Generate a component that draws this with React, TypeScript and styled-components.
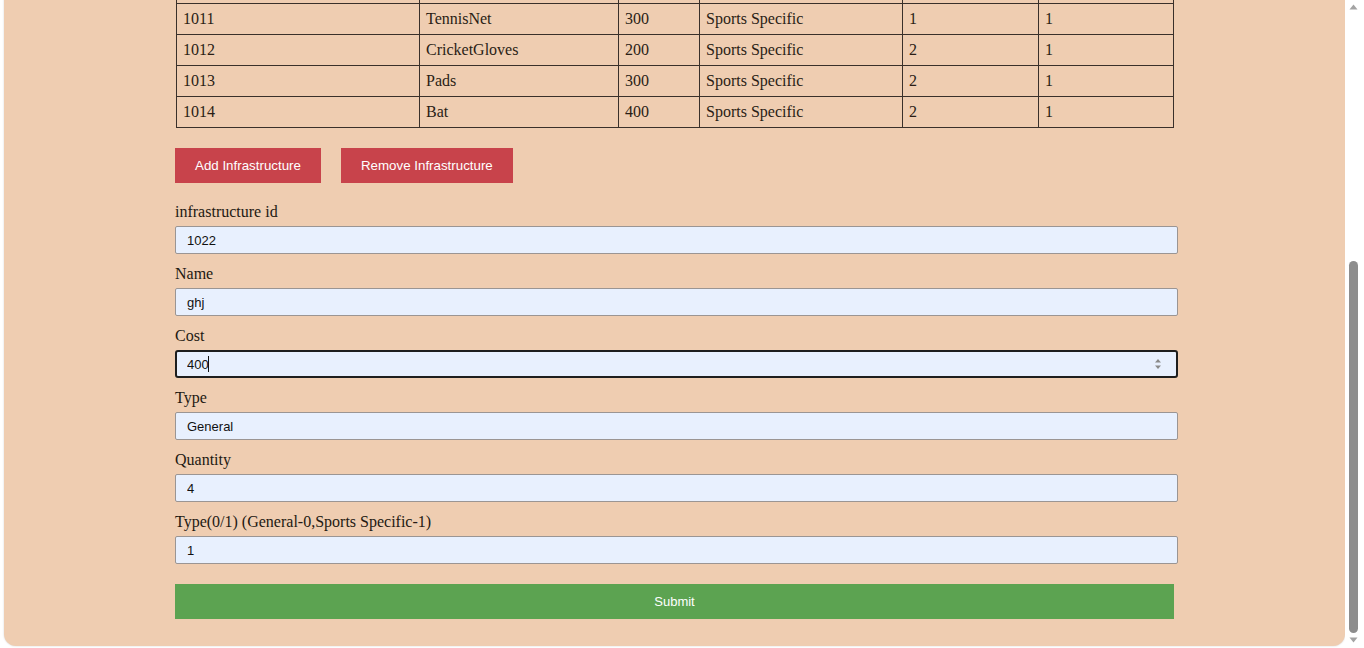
import React from "react";
import styled, { createGlobalStyle } from "styled-components";

const GlobalStyle = createGlobalStyle`
  html, body {
    margin: 0;
    padding: 0;
    background: #ffffff;
    overflow: hidden;
    font-family: "Liberation Serif", "Times New Roman", serif;
  }
  * { box-sizing: border-box; }
`;

const Screen = styled.div`
  display: flex;
  flex-direction: row;
  height: 648px;
  width: 1364px;
`;

const Viewport = styled.main`
  flex: 1;
  display: flex;
  flex-direction: column;
  justify-content: flex-end;
  overflow: hidden;
  padding: 0 0 2px 4px;
`;

const Card = styled.section`
  flex-shrink: 0;
  background: #efcdb1;
  border-radius: 0 0 12px 12px;
  box-shadow: 0 0 2px rgba(0, 0, 0, 0.18);
  padding: 0 0 27px;
`;

const Content = styled.div`
  width: 1000px;
  margin: 0 auto 0 171px;
`;

const Table = styled.table`
  border-collapse: collapse;
  table-layout: fixed;
  width: 998px;
  margin-left: 1px;
  font-size: 16px;
  color: #2a1d15;
`;

const Cell = styled.td<{ $w?: number }>`
  border: 1px solid #3a302a;
  padding: 0 6px;
  height: 31px;
  line-height: 18px;
  text-align: left;
  ${(p) => (p.$w ? `width: ${p.$w}px;` : "")}
`;

const ButtonRow = styled.div`
  display: flex;
  gap: 20px;
  margin-top: 20px;
`;

const RedButton = styled.button`
  height: 35px;
  padding: 0 20px;
  border: none;
  background: #c8434b;
  color: #ffffff;
  font-family: "Liberation Sans", Arial, sans-serif;
  font-size: 13.3333px;
`;

const Form = styled.form`
  display: flex;
  flex-direction: column;
  margin-top: 19px;
`;

const Label = styled.label`
  display: block;
  font-size: 16px;
  line-height: 19px;
  color: #231912;
  margin-bottom: 5px;
`;

const Field = styled.div`
  position: relative;
  margin-bottom: 10px;
`;

const Input = styled.input<{ $focused?: boolean }>`
  display: block;
  width: 1003px;
  height: 28px;
  background: #e8f0fe;
  border: ${(p) => (p.$focused ? "2px solid #1e1e1e" : "1px solid #9b9593")};
  border-radius: ${(p) => (p.$focused ? "3px" : "2px")};
  padding: 0 11px 0 ${(p) => (p.$focused ? "10px" : "11px")};
  font-family: "Liberation Sans", Arial, sans-serif;
  font-size: 13px;
  color: #111;
  outline: none;
`;

const Spinner = styled.svg`
  position: absolute;
  right: 13px;
  top: 8px;
`;

const Caret = styled.span`
  position: absolute;
  left: 33px;
  top: 6px;
  width: 1px;
  height: 16px;
  background: #111;
`;

const SubmitButton = styled.button`
  margin-top: 10px;
  width: 999px;
  height: 35px;
  border: none;
  background: #5ca351;
  color: #ffffff;
  font-family: "Liberation Sans", Arial, sans-serif;
  font-size: 13px;
`;

const ScrollTrack = styled.aside`
  width: 19px;
  height: 648px;
  background: #ffffff;
  display: flex;
  flex-direction: column;
  align-items: center;
  padding: 4px 2px 5px 0;
`;

const Arrow = styled.svg`
  flex-shrink: 0;
`;

const ThumbSpace = styled.div`
  flex: 1;
  width: 100%;
  display: flex;
  flex-direction: column;
  align-items: center;
`;

const Thumb = styled.div`
  width: 9px;
  background: #8d8d8d;
  border-radius: 5px;
`;

const rows = [
  ["1010", "TennisRacket", "400", "Sports Specific", "2", "1"],
  ["1011", "TennisNet", "300", "Sports Specific", "1", "1"],
  ["1012", "CricketGloves", "200", "Sports Specific", "2", "1"],
  ["1013", "Pads", "300", "Sports Specific", "2", "1"],
  ["1014", "Bat", "400", "Sports Specific", "2", "1"],
];

const widths = [243, 199, 81, 203, 136, 135];

const fields = [
  { label: "infrastructure id", value: "1022" },
  { label: "Name", value: "ghj" },
  { label: "Cost", value: "400", focused: true },
  { label: "Type", value: "General" },
  { label: "Quantity", value: "4" },
  { label: "Type(0/1) (General-0,Sports Specific-1)", value: "1" },
];

export default function App() {
  const thumbTop = 251;
  const thumbHeight = 372;
  return (
    <>
      <GlobalStyle />
      <Screen>
        <Viewport>
          <Card>
            <Content>
              <Table>
                <tbody>
                  {rows.map((r) => (
                    <tr key={r[0]}>
                      {r.map((c, i) => (
                        <Cell key={i} $w={widths[i]}>
                          {c}
                        </Cell>
                      ))}
                    </tr>
                  ))}
                </tbody>
              </Table>
              <ButtonRow>
                <RedButton type="button">Add Infrastructure</RedButton>
                <RedButton type="button">Remove Infrastructure</RedButton>
              </ButtonRow>
              <Form onSubmit={(e) => e.preventDefault()}>
                {fields.map((f) => (
                  <div key={f.label}>
                    <Label>{f.label}</Label>
                    <Field>
                      <Input $focused={f.focused} defaultValue={f.value} readOnly />
                      {f.focused && (
                        <>
                          <Caret />
                          <Spinner width="8" height="12" viewBox="0 0 8 12">
                            <path d="M4 1 L7 4.5 L1 4.5 Z" fill="#8a8a8a" />
                            <path d="M4 11 L7 7.5 L1 7.5 Z" fill="#8a8a8a" />
                          </Spinner>
                        </>
                      )}
                    </Field>
                  </div>
                ))}
                <SubmitButton type="submit">Submit</SubmitButton>
              </Form>
            </Content>
          </Card>
        </Viewport>
        <ScrollTrack>
          <Arrow width="9" height="6" viewBox="0 0 9 6">
            <path d="M4.5 0.5 L8.5 5.5 L0.5 5.5 Z" fill="#a3a3a3" />
          </Arrow>
          <ThumbSpace>
            <Thumb style={{ marginTop: thumbTop, height: thumbHeight }} />
          </ThumbSpace>
          <Arrow width="9" height="6" viewBox="0 0 9 6">
            <path d="M4.5 5.5 L8.5 0.5 L0.5 0.5 Z" fill="#a3a3a3" />
          </Arrow>
        </ScrollTrack>
      </Screen>
    </>
  );
}
